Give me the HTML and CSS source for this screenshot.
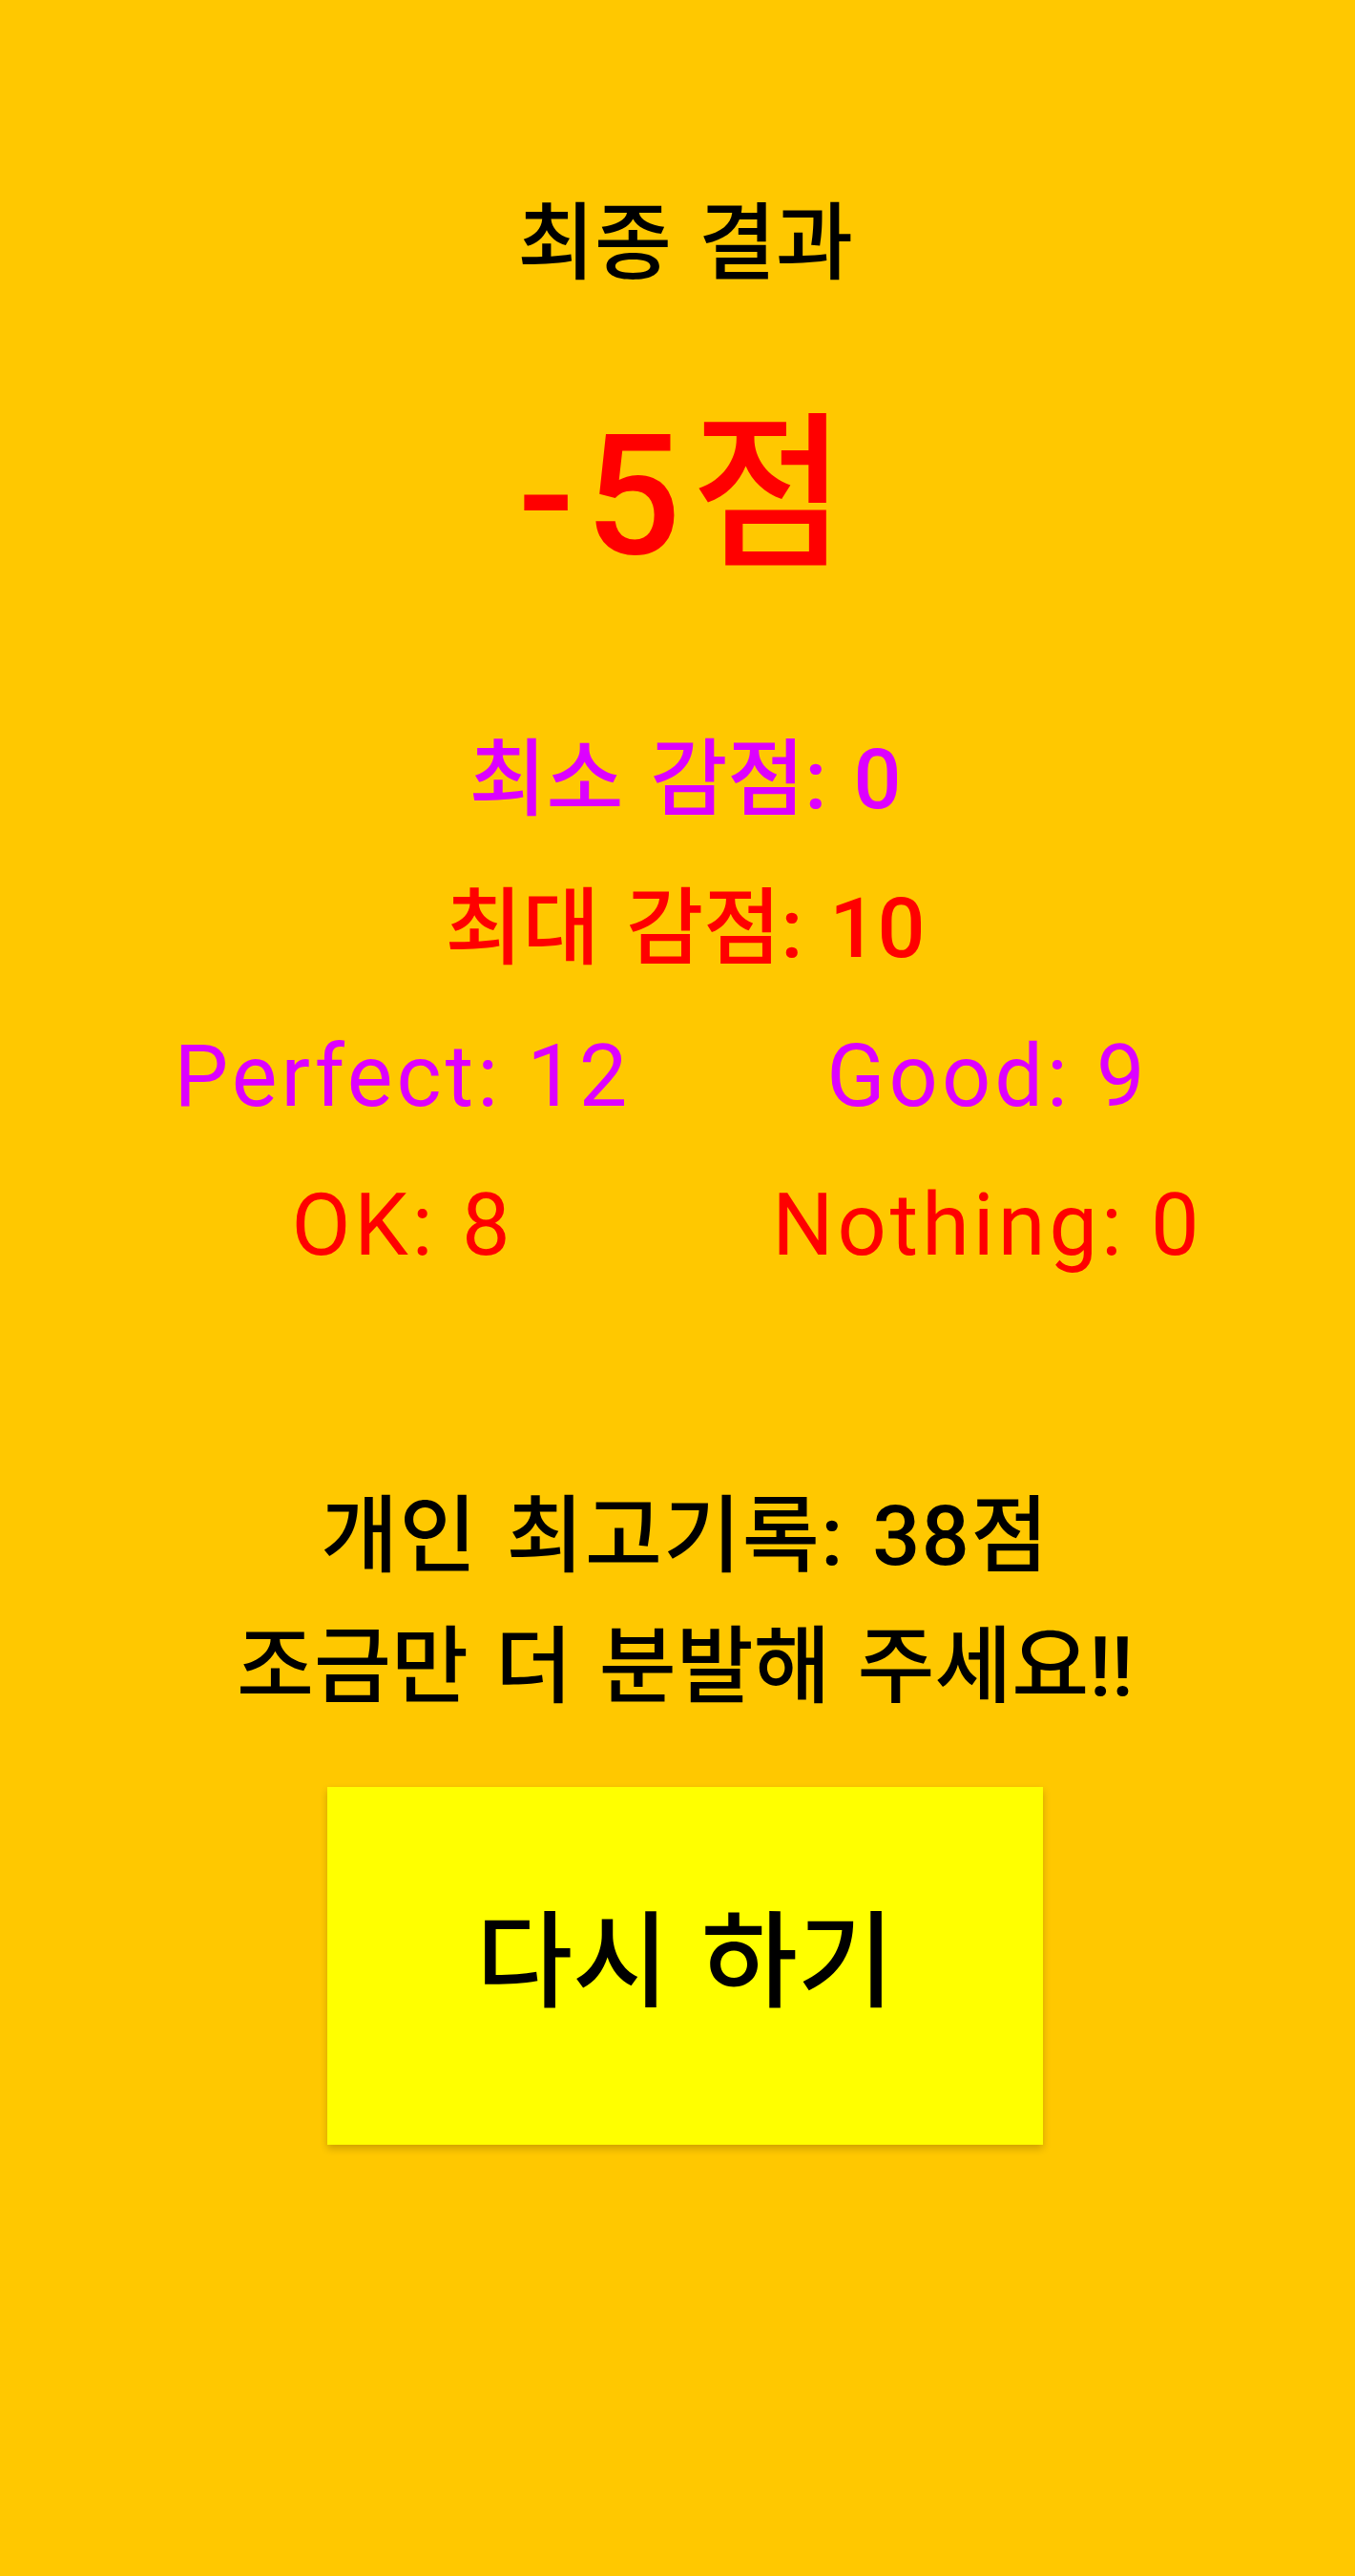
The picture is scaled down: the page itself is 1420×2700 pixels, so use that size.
FILE: index.html
```html
<!DOCTYPE html>
<html lang="ko">
<head>
<meta charset="utf-8">
<title>최종 결과</title>
<link rel="stylesheet" href="styles.css">
</head>
<body>
<main class="page">
  <h1 class="title">최종 결과</h1>
  <div class="score">-5점</div>
  <section class="stats">
    <div class="stat-line purple">최소 감점: 0</div>
    <div class="stat-line red">최대 감점: 10</div>
    <div class="stat-grid">
      <div class="stat-cell purple">Perfect: 12</div>
      <div class="stat-cell purple">Good: 9</div>
      <div class="stat-cell red">OK: 8</div>
      <div class="stat-cell red">Nothing: 0</div>
    </div>
  </section>
  <section class="record">
    <p class="record-line record-best">개인 최고기록: 38점</p>
    <p class="record-line">조금만 더 분발해 주세요!!</p>
  </section>
  <button class="retry" type="button">다시 하기</button>
</main>
</body>
</html>
```

FILE: styles.css
```css
html, body {
  margin: 0;
  padding: 0;
  background: #ffc800;
}

body {
  font-family: "Roboto", "Noto Sans CJK KR", sans-serif;
  font-weight: 500;
  color: #000;
  min-height: 2700px;
}

.page {
  box-sizing: border-box;
  width: 1420px;
  padding: 195px 0 0 16px;
  display: flex;
  flex-direction: column;
  align-items: center;
  text-align: center;
  word-spacing: 6px;
}

.title {
  margin: 0;
  font-size: 88px;
  font-weight: 500;
  line-height: 120px;
}

.score {
  margin-top: 105px;
  padding-left: 4px;
  font-size: 176px;
  line-height: 200px;
  letter-spacing: 11px;
  color: #ff0000;
}

.stats {
  margin-top: 119px;
  width: 100%;
  display: flex;
  flex-direction: column;
  align-items: center;
}

.stat-line {
  font-size: 88px;
  line-height: 156px;
}

.stat-grid {
  display: grid;
  grid-template-columns: 560px 560px;
  column-gap: 53px;
  padding-left: 21px;
  font-size: 90px;
  line-height: 156px;
}

.stat-cell {
  text-align: center;
  white-space: nowrap;
  font-weight: 400;
  letter-spacing: 4px;
  word-spacing: 0;
}

.purple { color: #dd00ff; }
.red { color: #ff0000; }

.record {
  margin-top: 178px;
}

.record-line {
  margin: 0;
  font-size: 88px;
  line-height: 137px;
}

.record-best {
  letter-spacing: 1.5px;
}

.retry {
  margin-top: 58px;
  width: 750px;
  height: 375px;
  padding: 0 0 6px;
  border: none;
  background: #ffff00;
  box-shadow: 0 4px 8px rgba(0, 0, 0, 0.2);
  font-family: "Roboto", "Noto Sans CJK KR", sans-serif;
  font-weight: 500;
  font-size: 110px;
  line-height: 1;
  word-spacing: 6px;
  color: #000;
  cursor: pointer;
}
```
